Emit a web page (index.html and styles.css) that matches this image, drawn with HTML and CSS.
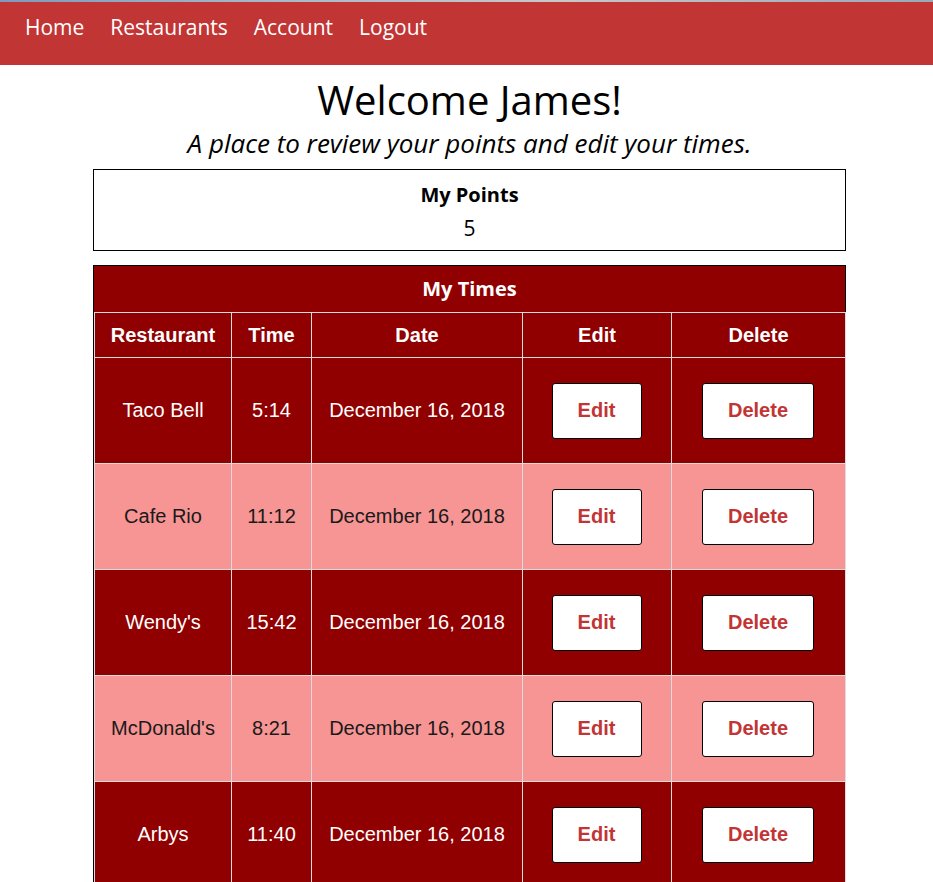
FILE: index.html
```html
<!DOCTYPE html>
<html lang="en">
<head>
<meta charset="utf-8">
<title>My Times</title>
<link rel="stylesheet" href="styles.css">
</head>
<body>
<div class="edge"></div>
<nav class="topnav">
  <a href="#">Home</a>
  <a href="#">Restaurants</a>
  <a href="#">Account</a>
  <a href="#">Logout</a>
</nav>
<main class="main">
  <h1 class="title">Welcome James!</h1>
  <p class="subtitle">A place to review your points and edit your times.</p>
  <section class="points">
    <h3 class="points-head">My Points</h3>
    <p class="points-value">5</p>
  </section>
  <section class="times">
    <h3 class="times-head">My Times</h3>
    <table class="times-table">
      <colgroup>
        <col class="c1"><col class="c2"><col class="c3"><col class="c4"><col class="c5">
      </colgroup>
      <thead>
        <tr><th>Restaurant</th><th>Time</th><th>Date</th><th>Edit</th><th>Delete</th></tr>
      </thead>
      <tbody>
        <tr class="dark"><td>Taco Bell</td><td>5:14</td><td>December 16, 2018</td><td><button class="btn btn-edit">Edit</button></td><td><button class="btn btn-del">Delete</button></td></tr>
        <tr class="light"><td>Cafe Rio</td><td>11:12</td><td>December 16, 2018</td><td><button class="btn btn-edit">Edit</button></td><td><button class="btn btn-del">Delete</button></td></tr>
        <tr class="dark"><td>Wendy's</td><td>15:42</td><td>December 16, 2018</td><td><button class="btn btn-edit">Edit</button></td><td><button class="btn btn-del">Delete</button></td></tr>
        <tr class="light"><td>McDonald's</td><td>8:21</td><td>December 16, 2018</td><td><button class="btn btn-edit">Edit</button></td><td><button class="btn btn-del">Delete</button></td></tr>
        <tr class="dark"><td>Arbys</td><td>11:40</td><td>December 16, 2018</td><td><button class="btn btn-edit">Edit</button></td><td><button class="btn btn-del">Delete</button></td></tr>
      </tbody>
    </table>
  </section>
</main>
</body>
</html>
```
FILE: styles.css
```css
html, body {
  margin: 0;
  padding: 0;
  background: #ffffff;
}
body {
  font-family: "Open Sans", "Noto Sans", sans-serif;
  color: #000;
}
.edge {
  height: 2px;
  background: linear-gradient(90deg, #7d9bbd 0%, #a9b9c9 30%, #c8c8c8 60%, #9aa8b8 100%);
}
.topnav {
  background: #c23535;
  height: 63px;
  box-sizing: border-box;
  padding: 10px 0 0 12px;
  display: flex;
}
.topnav a {
  color: #fff;
  text-decoration: none;
  font-size: 21px;
  line-height: 30px;
  padding: 0 13px;
}
.main {
  width: 753px;
  margin-left: 93px;
  text-align: center;
}
.title {
  font-weight: 400;
  font-size: 40px;
  line-height: 48px;
  margin: 11px 0 0;
}
.subtitle {
  font-style: italic;
  font-size: 26px;
  line-height: 32px;
  margin: 3px 0 10px;
}
.points {
  border: 1px solid #000;
  height: 80px;
  box-sizing: content-box;
}
.points-head {
  font-size: 20px;
  font-weight: 700;
  line-height: 26px;
  margin: 12px 0 0;
}
.points-value {
  font-size: 21px;
  line-height: 28px;
  margin: 6px 0 0;
}
.times {
  margin-top: 14px;
  border: 1px solid #000;
  background: #900000;
}
.times-head {
  color: #fff;
  font-size: 20px;
  font-weight: 700;
  line-height: 46px;
  height: 46px;
  margin: 0;
}
.times-table {
  width: 751px;
  border-collapse: collapse;
  table-layout: fixed;
  font-family: "Liberation Sans", Arial, sans-serif;
  font-size: 20px;
}
.c1 { width: 137px; }
.c2 { width: 80px; }
.c3 { width: 211px; }
.c4 { width: 149px; }
.c5 { width: 174px; }
.times-table th,
.times-table td {
  border: 1px solid #dcdcdc;
  text-align: center;
  padding: 0;
}
.times-table th {
  color: #fff;
  height: 44px;
  font-weight: 700;
}
.times-table td {
  height: 105px;
}
.dark td {
  background: #900000;
  color: #fff;
}
.light td {
  background: #f79494;
  color: #1a1a1a;
}
.btn {
  background: #fff;
  border: 1px solid #000;
  border-radius: 3px;
  height: 56px;
  font-family: "Liberation Sans", Arial, sans-serif;
  font-size: 20px;
  font-weight: 700;
  color: #c23535;
  padding: 0;
  margin-left: -1px;
  cursor: pointer;
}
.btn-edit { width: 90px; }
.btn-del { width: 112px; }
```
